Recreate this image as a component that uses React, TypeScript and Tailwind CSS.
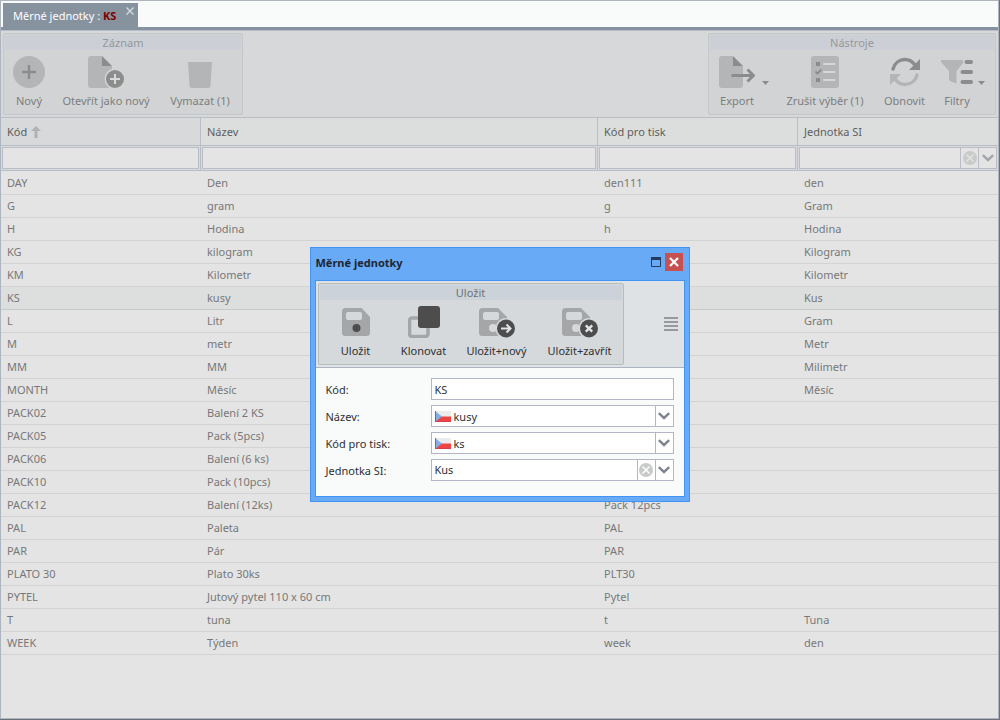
import type { ReactNode } from "react";
import { clsx } from "clsx";

interface Unit {
  code: string;
  name: string;
  print?: string;
  si?: string;
}

const units: Unit[] = [
  { code: "DAY", name: "Den", print: "den111", si: "den" },
  { code: "G", name: "gram", print: "g", si: "Gram" },
  { code: "H", name: "Hodina", print: "h", si: "Hodina" },
  { code: "KG", name: "kilogram", si: "Kilogram" },
  { code: "KM", name: "Kilometr", si: "Kilometr" },
  { code: "KS", name: "kusy", si: "Kus" },
  { code: "L", name: "Litr", si: "Gram" },
  { code: "M", name: "metr", si: "Metr" },
  { code: "MM", name: "MM", si: "Milimetr" },
  { code: "MONTH", name: "Měsíc", si: "Měsíc" },
  { code: "PACK02", name: "Balení 2 KS" },
  { code: "PACK05", name: "Pack (5pcs)" },
  { code: "PACK06", name: "Balení (6 ks)" },
  { code: "PACK10", name: "Pack (10pcs)" },
  { code: "PACK12", name: "Balení (12ks)", print: "Pack 12pcs" },
  { code: "PAL", name: "Paleta", print: "PAL" },
  { code: "PAR", name: "Pár", print: "PAR" },
  { code: "PLATO 30", name: "Plato 30ks", print: "PLT30" },
  { code: "PYTEL", name: "Jutový pytel 110 x 60 cm", print: "Pytel" },
  { code: "T", name: "tuna", print: "t", si: "Tuna" },
  { code: "WEEK", name: "Týden", print: "week", si: "den" },
];

const selectedCode = "KS";

/* ---------- icons ---------- */

function NewIcon() {
  return (
    <svg width="32" height="32" viewBox="0 0 32 32" aria-hidden="true">
      <circle cx="16" cy="16" r="16" fill="#b4b5b6" />
      <path d="M16 9v14M9 16h14" stroke="#8c8c8c" strokeWidth="2.4" />
    </svg>
  );
}

function OpenAsNewIcon() {
  return (
    <svg width="36" height="32" viewBox="0 0 36 32" aria-hidden="true">
      <path d="M3 0H14V10H24V32H3a3 3 0 0 1-3-3V3a3 3 0 0 1 3-3Z" fill="#b4b5b6" />
      <path d="M14 0l10 10H14Z" fill="#8c8c8c" />
      <circle cx="27" cy="23" r="10.500" fill="#d2d3d4" />
      <circle cx="27" cy="23" r="9" fill="#8c8c8c" />
      <path d="M27 18v10M22 23h10" stroke="#d8d9da" strokeWidth="2" />
    </svg>
  );
}

function TrashIcon() {
  return (
    <svg width="32" height="32" viewBox="0 0 32 32" aria-hidden="true">
      <path d="M4 6H28L26.500 29.500a2.500 2.500 0 0 1-2.500 2.500H8a2.500 2.500 0 0 1-2.500-2.500Z" fill="#b4b5b6" />
    </svg>
  );
}

function ExportIcon() {
  return (
    <svg width="36" height="32" viewBox="0 0 36 32" aria-hidden="true">
      <path d="M3 0H14V10H24V29a3 3 0 0 1-3 3H3a3 3 0 0 1-3-3V3a3 3 0 0 1 3-3Z" fill="#b4b5b6" />
      <path d="M14 0l10 10H14Z" fill="#8c8c8c" />
      <path d="M12.500 19.500H34M28.500 13.500l6 6-6 6" fill="none" stroke="#8c8c8c" strokeWidth="3" />
    </svg>
  );
}

function ChecklistIcon() {
  return (
    <svg width="32" height="32" viewBox="0 0 32 32" aria-hidden="true">
      <rect x="2" width="28" height="32" rx="3" fill="#b4b5b6" />
      <path d="M7 6h4v4H7zM7 22h4v4H7z" fill="#8c8c8c" />
      <path d="M6.500 15.500l2 2 4-4" fill="none" stroke="#8c8c8c" strokeWidth="1.8" />
      <path d="M15 8h10.500M15 16h10.500M15 24h10.500" stroke="#d6d7d8" strokeWidth="2" strokeLinecap="round" />
    </svg>
  );
}

function RefreshIcon() {
  return (
    <svg width="32" height="32" viewBox="0 0 32 32" aria-hidden="true">
      <path d="M4 13C5.500 7 10.500 3.500 16 3.500c4 0 7.500 2 10 5.500" fill="none" stroke="#8c8c8c" strokeWidth="3.400" strokeLinecap="round" />
      <path d="M31 3v11H20Z" fill="#8c8c8c" />
      <path d="M28 19C26.500 25 21.500 28.500 16 28.500c-4 0-7.500-2-10-5.500" fill="none" stroke="#b4b5b6" strokeWidth="3.400" strokeLinecap="round" />
      <path d="M1 29V18h11Z" fill="#b4b5b6" />
    </svg>
  );
}

function FilterIcon() {
  return (
    <svg width="32" height="32" viewBox="0 0 32 32" aria-hidden="true">
      <path d="M1 4H21a1 1 0 0 1 1 1.500V7L15.500 15V27.500L10 25.500q-2-1-2-3V15L0 6V5a1 1 0 0 1 1-1Z" fill="#b4b5b6" />
      <path d="M25.500 6h4.500M21.500 16H30M21.500 26H30" stroke="#8c8c8c" strokeWidth="4" strokeLinecap="round" />
    </svg>
  );
}

function Floppy({ children }: { children?: ReactNode }) {
  return (
    <svg width="38" height="32" viewBox="0 0 38 32" aria-hidden="true">
      <path d="M4 2H20L29 11V26.500a3.500 3.500 0 0 1-3.500 3.500H4.500A3.500 3.500 0 0 1 1 26.500V5.500A3.500 3.500 0 0 1 4.500 2Z" fill="#a5a6a7" />
      <rect x="5" y="6" width="16" height="8" rx="2" fill="#d6d9dc" />
      {children}
    </svg>
  );
}

function SaveIcon() {
  return (
    <svg width="28" height="32" viewBox="0 0 28 32" aria-hidden="true">
      <path d="M3.500 2H19.500L28 11V26.500a3.500 3.500 0 0 1-3.500 3.500H3.500A3.500 3.500 0 0 1 0 26.500V5.500A3.500 3.500 0 0 1 3.500 2Z" fill="#a5a6a7" />
      <rect x="4" y="6" width="16" height="8" rx="2" fill="#d6d9dc" />
      <circle cx="14.500" cy="22" r="4" fill="#4d4d4d" />
    </svg>
  );
}

function CloneIcon() {
  return (
    <svg width="32" height="32" viewBox="0 0 32 32" aria-hidden="true">
      <rect x="1.500" y="12" width="18.500" height="18.500" rx="2.500" fill="none" stroke="#a5a6a7" strokeWidth="3.600" />
      <rect x="10" y="0" width="22" height="22" rx="3" fill="#4d4d4d" />
    </svg>
  );
}

function SaveNewIcon() {
  return (
    <Floppy>
      <circle cx="15" cy="22" r="4" fill="#d6d9dc" />
      <circle cx="28" cy="22.500" r="10.500" fill="#d6d9dc" />
      <circle cx="28" cy="22.500" r="9" fill="#4d4d4d" />
      <path d="M23 22.500h9M28.500 18.500l4 4-4 4" fill="none" stroke="#e2e4e6" strokeWidth="2" />
    </Floppy>
  );
}

function SaveCloseIcon() {
  return (
    <Floppy>
      <circle cx="15" cy="22" r="4" fill="#d6d9dc" />
      <circle cx="28" cy="22.500" r="10.500" fill="#d6d9dc" />
      <circle cx="28" cy="22.500" r="9" fill="#4d4d4d" />
      <path d="M24.800 19.300l6.400 6.400M31.200 19.300l-6.400 6.400" stroke="#e2e4e6" strokeWidth="2.400" />
    </Floppy>
  );
}

function Caret() {
  return (
    <svg width="7" height="4" viewBox="0 0 7 4" className="mt-[25px]" aria-hidden="true">
      <path d="M0 0h7L3.500 4Z" fill="#8c8c8c" />
    </svg>
  );
}

function ChevronIcon({ color }: { color: string }) {
  return (
    <svg width="12" height="8" viewBox="0 0 12 8" aria-hidden="true">
      <path d="M0.800 1.200L6 6l5.200-4.800" fill="none" stroke={color} strokeWidth="2.400" />
    </svg>
  );
}

function ClearIcon({ color, cross }: { color: string; cross: string }) {
  return (
    <svg width="14" height="14" viewBox="0 0 14 14" aria-hidden="true">
      <circle cx="7" cy="7" r="7" fill={color} />
      <path d="M3.500 3.500l7 7M10.500 3.500l-7 7" stroke={cross} strokeWidth="1.400" />
    </svg>
  );
}

function CzechFlag() {
  return (
    <svg width="16" height="11" viewBox="0 0 16 11" className="ml-[3px] shrink-0" aria-hidden="true">
      <rect width="16" height="5.500" fill="#ececec" />
      <rect y="5.500" width="16" height="5.500" fill="#ee4443" />
      <path d="M0 0l7 5.500L0 11Z" fill="#86aee6" />
      <path d="M0.500 0v11" stroke="#3f78c8" />
      <path d="M1 10.500h15" stroke="#c93f45" strokeOpacity="0.7" />
    </svg>
  );
}

/* ---------- toolbar ---------- */

interface ToolGroupProps {
  title: string;
  tone: "muted" | "active";
  children: ReactNode;
}

function ToolGroup({ title, tone, children }: ToolGroupProps) {
  return (
    <section
      aria-label={title}
      className={clsx(
        "h-[82px] rounded-[2px] border p-px",
        tone === "muted" ? "border-[#c5c7c8] bg-[#d2d3d4]" : "border-[#b9bbbc] bg-[#d6d9dc]",
      )}
    >
      <h2
        className={clsx(
          "h-[15px] text-center leading-4",
          tone === "muted" ? "bg-[#cccfd5] text-[#969899]" : "bg-[#ccd2d9] text-[#707274]",
        )}
      >
        {title}
      </h2>
      <div className="flex">{children}</div>
    </section>
  );
}

interface ToolButtonProps {
  label: string;
  icon: ReactNode;
  width: string;
  caret?: boolean;
  className?: string;
}

function ToolButton({ label, icon, width, caret, className }: ToolButtonProps) {
  return (
    <button type="button" className={clsx("flex pt-1.5 whitespace-nowrap", className)}>
      <span className={clsx("flex flex-col items-center gap-[5px]", width)}>
        {icon}
        <span className="leading-4">{label}</span>
      </span>
      {caret && <Caret />}
    </button>
  );
}

function Ribbon() {
  return (
    <div className="flex h-[86px] justify-between bg-[#d6d8da] px-0.5 pt-0.5 text-[#7c7e7f]">
      <ToolGroup title="Záznam" tone="muted">
        <ToolButton label="Nový" icon={<NewIcon />} width="w-12" />
        <ToolButton label="Otevřít jako nový" icon={<OpenAsNewIcon />} width="w-[106px]" />
        <ToolButton label="Vymazat (1)" icon={<TrashIcon />} width="w-[82px]" />
      </ToolGroup>
      <ToolGroup title="Nástroje" tone="muted">
        <ToolButton label="Export" icon={<ExportIcon />} width="w-[50px]" caret className="w-[65px] pl-0.5" />
        <ToolButton label="Zrušit výběr (1)" icon={<ChecklistIcon />} width="w-[100px]" />
        <ToolButton label="Obnovit" icon={<RefreshIcon />} width="w-[59px]" />
        <ToolButton label="Filtry" icon={<FilterIcon />} width="w-[42px]" caret className="w-[60px] pl-0.5" />
      </ToolGroup>
    </div>
  );
}

/* ---------- grid ---------- */

const headCell = "h-[29px] border-y border-[#b9bec6] pl-1.5 text-left font-normal";
const filterCell = "h-[25px] border-b border-[#b9bec6] bg-[#d8dadd] p-px";
const filterInput = "block h-[22px] w-full min-w-0 border border-[#b9bec6] bg-[#e4e4e4] px-1 outline-none";

function UnitsTable() {
  return (
    <table className="w-full table-fixed border-separate border-spacing-0">
      <colgroup>
        <col className="w-[200px]" />
        <col />
        <col className="w-[200px]" />
        <col className="w-[200px]" />
      </colgroup>
      <thead className="text-[#5c5f60]">
        <tr className="bg-[#dcdedd]">
          <th className={clsx(headCell, "border-r bg-[#d8d9db]")} aria-sort="ascending">
            <span className="flex items-center gap-1">
              Kód
              <svg width="10" height="12" viewBox="0 0 10 12" aria-hidden="true">
                <path d="M5 0l5 5H6.500v7h-3V5H0Z" fill="#b0b1b2" />
              </svg>
            </span>
          </th>
          <th className={clsx(headCell, "border-r")}>Název</th>
          <th className={clsx(headCell, "border-r")}>Kód pro tisk</th>
          <th className={headCell}>Jednotka SI</th>
        </tr>
        <tr>
          <td className={clsx(filterCell, "border-r")}>
            <input aria-label="Filtr Kód" className={filterInput} />
          </td>
          <td className={clsx(filterCell, "border-r")}>
            <input aria-label="Filtr Název" className={filterInput} />
          </td>
          <td className={clsx(filterCell, "border-r")}>
            <input aria-label="Filtr Kód pro tisk" className={filterInput} />
          </td>
          <td className={filterCell}>
            <div className="flex h-[22px] border border-[#b9bec6] bg-[#e4e4e4]">
              <input aria-label="Filtr Jednotka SI" className="min-w-0 flex-1 bg-transparent px-1 outline-none" />
              <button type="button" aria-label="Vymazat filtr" className="flex w-[18px] items-center justify-center border-l border-[#b9bec6]">
                <ClearIcon color="#c9cacb" cross="#e4e4e4" />
              </button>
              <button type="button" aria-label="Rozbalit" className="flex w-[18px] items-center justify-center border-l border-[#b9bec6]">
                <ChevronIcon color="#a3a6aa" />
              </button>
            </div>
          </td>
        </tr>
      </thead>
      <tbody className="text-[#777879] before:block before:h-px">
        {units.map((unit) => (
          <tr
            key={unit.code}
            aria-selected={unit.code === selectedCode}
            className={clsx(
              "[&>td]:h-[23px] [&>td]:border-b [&>td]:pl-1.5",
              unit.code === selectedCode ? "bg-[#dcdfde] [&>td]:border-[#c6caca]" : "[&>td]:border-[#d2d3d4]",
            )}
          >
            <td>{unit.code}</td>
            <td>{unit.name}</td>
            <td>{unit.print}</td>
            <td>{unit.si}</td>
          </tr>
        ))}
      </tbody>
    </table>
  );
}

/* ---------- edit dialog ---------- */

const fieldBox = "flex h-[22px] items-center border border-[#b3b5c9] bg-white";
const fieldButton = "flex w-[18px] shrink-0 items-center justify-center self-stretch border-l border-[#b3b5c9]";
const fieldInput = "h-full min-w-0 flex-1 bg-transparent px-[3px] outline-none";
const fieldLabel = "pt-px";

function LocalizedField({ id, label, value }: { id: string; label: string; value: string }) {
  return (
    <>
      <label htmlFor={id} className={fieldLabel}>
        {label}
      </label>
      <div className={fieldBox}>
        <CzechFlag />
        <input id={id} defaultValue={value} className={fieldInput} />
        <button type="button" aria-label="Rozbalit" className={fieldButton}>
          <ChevronIcon color="#7f858d" />
        </button>
      </div>
    </>
  );
}

function EditDialog() {
  return (
    <div
      role="dialog"
      aria-labelledby="dialog-title"
      className="absolute inset-x-0 top-[247px] mx-auto w-[380px] border border-[#3f94f6] bg-[#69aaf7] px-1 pb-1 text-[#2f3031]"
    >
      <header className="flex h-8 items-center justify-between pb-0.5 pl-px">
        <h1 id="dialog-title" className="font-bold text-[#1c2733]">
          Měrné jednotky
        </h1>
        <div className="flex items-center gap-1 pr-0.5 pb-0.5">
          <button type="button" aria-label="Maximalizovat">
            <svg width="10" height="10" viewBox="0 0 10 10" aria-hidden="true">
              <path d="M0.500 1.500h9v8h-9Z" fill="none" stroke="#243b5c" />
              <path d="M0 1.500h10" stroke="#243b5c" strokeWidth="3" />
            </svg>
          </button>
          <button type="button" aria-label="Zavřít" className="flex size-[18px] items-center justify-center bg-[#c75050]">
            <svg width="10" height="10" viewBox="0 0 10 10" aria-hidden="true">
              <path d="M1 1l8 8M9 1l-8 8" stroke="#fff" strokeWidth="2.200" />
            </svg>
          </button>
        </div>
      </header>

      <div className="border border-[#3f94f6] bg-[#f9fbfb]">
        <div className="flex h-[87px] items-start justify-between border-b border-[#acb5bf] bg-[#dfe2e5] px-0.5 pt-0.5">
          <ToolGroup title="Uložit" tone="active">
            <ToolButton label="Uložit" icon={<SaveIcon />} width="w-[72px]" />
            <ToolButton label="Klonovat" icon={<CloneIcon />} width="w-16" />
            <ToolButton label="Uložit+nový" icon={<SaveNewIcon />} width="w-[82px]" />
            <ToolButton label="Uložit+zavřít" icon={<SaveCloseIcon />} width="w-[84px]" />
          </ToolGroup>
          <button type="button" aria-label="Nabídka" className="mt-[34px] mr-1">
            <svg width="14" height="14" viewBox="0 0 14 14" aria-hidden="true">
              <path d="M0 1h14M0 5h14M0 9h14M0 13h14" stroke="#97999b" strokeWidth="2" />
            </svg>
          </button>
        </div>

        <form className="grid grid-cols-[105px_1fr] items-center gap-y-[5px] px-2.5 pt-2.5 pb-[15px]">
          <label htmlFor="code" className={fieldLabel}>
            Kód:
          </label>
          <div className={fieldBox}>
            <input id="code" defaultValue="KS" className={fieldInput} />
          </div>
          <LocalizedField id="name" label="Název:" value="kusy" />
          <LocalizedField id="print-code" label="Kód pro tisk:" value="ks" />
          <label htmlFor="si-unit" className={fieldLabel}>
            Jednotka SI:
          </label>
          <div className={fieldBox}>
            <select id="si-unit" defaultValue="Kus" className={clsx(fieldInput, "appearance-none")}>
              <option>Kus</option>
            </select>
            <button type="button" aria-label="Vymazat" className={fieldButton}>
              <ClearIcon color="#c9caca" cross="#ffffff" />
            </button>
            <button type="button" aria-label="Rozbalit" className={fieldButton}>
              <ChevronIcon color="#7f858d" />
            </button>
          </div>
        </form>
      </div>
    </div>
  );
}

export default function App() {
  return (
    <div className="relative flex min-h-screen flex-col border-r border-b border-[#6b7176] font-['Noto_Sans',sans-serif] text-[11px] leading-4">
      <div className="flex flex-1 flex-col border border-[#adb6c0] bg-[#e4e4e4]">
        <nav className="flex h-[29px] border-b-[3px] border-[#87929f] bg-[#f9fbfb] pt-0.5 pl-0.5">
          <div className="flex w-[135px] items-start justify-between bg-[#87929f] pl-2.5">
            <button type="button" className="pt-[5px] whitespace-nowrap text-white">
              Měrné jednotky : <strong className="text-[#800000]">KS</strong>
            </button>
            <button type="button" aria-label="Zavřít záložku" className="pt-1 pr-1">
              <svg width="8" height="8" viewBox="0 0 8 8" aria-hidden="true">
                <path d="M0.500 0.500l7 7M7.500 0.500l-7 7" stroke="#d5dadf" strokeWidth="1.400" />
              </svg>
            </button>
          </div>
        </nav>
        <div className="h-px bg-[#b5bec8]" />
        <Ribbon />
        <UnitsTable />
      </div>
      <EditDialog />
    </div>
  );
}
